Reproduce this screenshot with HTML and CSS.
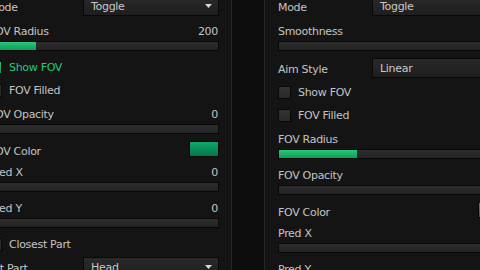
FILE: index.html
```html
<!DOCTYPE html>
<html lang="en">
<head>
  <meta charset="UTF-8" />
  <title>Aim Settings</title>
  <link rel="stylesheet" href="styles.css">
</head>
<body>

  <div class="screen">

    <!-- left panel (FOV) -->
    <section class="panel">
      <div class="row-drop">
        <span class="label">Mode</span>
        <div class="drop"><span>Toggle</span><svg width="7" height="4"><path d="M0 0h7L3.5 4z" fill="#d6d6d6"/></svg></div>
      </div>

      <div class="slider">
        <div class="slider-head"><span>FOV Radius</span><span>200</span></div>
        <div class="bar"><div class="fill" style="width: 20%"></div></div>
      </div>

      <div class="check on"><span class="box"></span><span>Show FOV</span></div>
      <div class="check"><span class="box"></span><span>FOV Filled</span></div>

      <div class="slider">
        <div class="slider-head"><span>FOV Opacity</span><span>0</span></div>
        <div class="bar"></div>
      </div>

      <div class="row-color">
        <span>FOV Color</span>
        <span class="swatch"></span>
      </div>

      <div class="slider">
        <div class="slider-head"><span>Pred X</span><span>0</span></div>
        <div class="bar"></div>
      </div>

      <div class="slider">
        <div class="slider-head"><span>Pred Y</span><span>0</span></div>
        <div class="bar"></div>
      </div>

      <div class="check"><span class="box"></span><span>Closest Part</span></div>

      <div class="row-drop">
        <span class="label">Hit Part</span>
        <div class="drop"><span>Head</span><svg width="7" height="4"><path d="M0 0h7L3.5 4z" fill="#d6d6d6"/></svg></div>
      </div>
    </section>

    <!-- right panel (aim) -->
    <section class="panel">
      <div class="row-drop">
        <span class="label">Mode</span>
        <div class="drop"><span>Toggle</span><svg width="7" height="4"><path d="M0 0h7L3.5 4z" fill="#d6d6d6"/></svg></div>
      </div>

      <div class="slider">
        <div class="slider-head"><span>Smoothness</span><span>0</span></div>
        <div class="bar"></div>
      </div>

      <div class="row-drop">
        <span class="label">Aim Style</span>
        <div class="drop"><span>Linear</span><svg width="7" height="4"><path d="M0 0h7L3.5 4z" fill="#d6d6d6"/></svg></div>
      </div>

      <div class="check"><span class="box"></span><span>Show FOV</span></div>
      <div class="check"><span class="box"></span><span>FOV Filled</span></div>

      <div class="slider">
        <div class="slider-head"><span>FOV Radius</span><span>150</span></div>
        <div class="bar"><div class="fill" style="width: 34%"></div></div>
      </div>

      <div class="slider">
        <div class="slider-head"><span>FOV Opacity</span><span>0</span></div>
        <div class="bar"></div>
      </div>

      <div class="row-color">
        <span>FOV Color</span>
        <span class="swatch"></span>
      </div>

      <div class="slider">
        <div class="slider-head"><span>Pred X</span><span>0</span></div>
        <div class="bar"></div>
      </div>

      <div class="slider">
        <div class="slider-head"><span>Pred Y</span><span>0</span></div>
        <div class="bar"></div>
      </div>
    </section>

  </div>

</body>
</html>
```

FILE: styles.css
```css
* {
  box-sizing: border-box;
  margin: 0;
  padding: 0;
}

body {
  width: 480px;
  height: 270px;
  overflow: hidden;
  background-color: #0d0d0d;
  font-family: "DejaVu Sans", Tahoma, Verdana, sans-serif;
  font-size: 11px;
  letter-spacing: -0.3px;
  color: #c4c4c4;
}

.screen {
  display: flex;
  gap: 32px;
  margin: -18px 0 0 -25px;
}

.panel {
  flex: none;
  width: 257px;
  height: 320px;
  padding: 13px 12px 0 13px;
  background-color: #141414;
  border: 1px solid #272727;
  display: flex;
  flex-direction: column;
  gap: 9px;
}

/* spacing between different kinds of rows */
.slider + .row-drop { margin-top: -2px; }
.row-drop + .check { margin-top: -2px; }
.check + .slider { margin-top: 2px; }
.slider + .slider { margin-top: 1px; }
.slider + .row-color { margin-top: -2px; }
.check + .row-drop { margin-top: -3px; }

/* Dropdown rows */
.row-drop {
  display: flex;
  align-items: center;
  height: 20px;
  line-height: 13px;
}

.row-drop .label {
  width: 94px;
  flex: none;
  padding-top: 2px;
}

.drop {
  flex: 1;
  height: 20px;
  display: flex;
  align-items: center;
  justify-content: space-between;
  padding: 0 6px 0 7px;
  background: linear-gradient(#2a2a2a, #1e1e1e);
  border: 1px solid #080808;
  color: #c8c8c8;
}

/* Sliders */
.slider-head {
  display: flex;
  justify-content: space-between;
  height: 13px;
  line-height: 13px;
  padding-right: 1px;
}

.bar {
  margin-top: 3px;
  height: 10px;
  background: linear-gradient(#2e2e2e, #232323);
  border: 1px solid #080808;
}

.fill {
  height: 100%;
  background: linear-gradient(#26c77c, #119b59);
}

/* Checkboxes */
.check {
  display: flex;
  align-items: center;
  gap: 7px;
  height: 14px;
  line-height: 13px;
}

.box {
  width: 13px;
  height: 13px;
  flex: none;
  background: linear-gradient(#333, #292929);
  border: 1px solid #080808;
}

.check.on {
  color: #22cc78;
}

.check.on .box {
  background: linear-gradient(#26c77c, #119b59);
}

/* Color picker */
.row-color {
  display: flex;
  align-items: center;
  justify-content: space-between;
  height: 16px;
  line-height: 13px;
}

.row-color span:first-child {
  padding-top: 4px;
}

.swatch {
  width: 30px;
  height: 16px;
  background: linear-gradient(#0da86b, #077548);
  border: 1px solid #060606;
}
```
